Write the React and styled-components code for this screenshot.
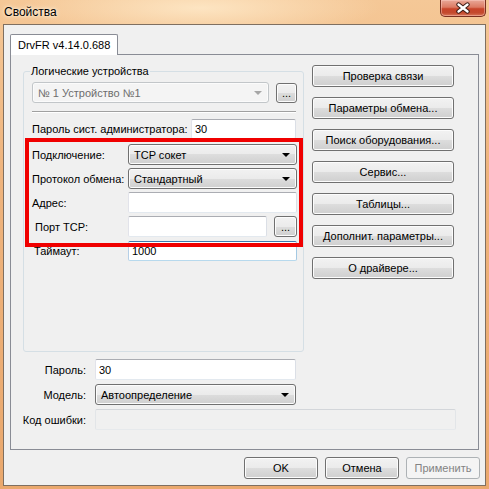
import React from 'react';
import styled, { createGlobalStyle, css } from 'styled-components';

const GlobalStyle = createGlobalStyle`
  html, body {
    margin: 0;
    padding: 0;
  }
  body {
    width: 489px;
    height: 489px;
    overflow: hidden;
    font-family: 'Liberation Sans', Arial, sans-serif;
    font-size: 11px;
    color: #000;
  }
  * {
    box-sizing: border-box;
  }
`;

const Window = styled.div`
  width: 489px;
  height: 489px;
  display: flex;
  flex-direction: column;
  padding: 0 3px 3px 3px;
  background: radial-gradient(ellipse 180px 30px at 200px 8px, rgba(255, 236, 205, 0.8), rgba(255, 236, 205, 0) 100%),
    linear-gradient(180deg, #f5c897 0%, #efb47d 35%, #eaa86d 100%);
`;

const TitleBar = styled.div`
  height: 24px;
  flex: none;
  display: flex;
  justify-content: space-between;
  align-items: flex-start;
`;

const Title = styled.span`
  margin: 5px 0 0 1px;
  font-size: 12px;
  line-height: 14px;
  text-shadow: 0 0 5px #fff5e6, 0 0 3px #fff5e6;
`;

const CloseButton = styled.div`
  width: 46px;
  height: 17px;
  display: flex;
  align-items: center;
  justify-content: center;
  border: 1px solid #7a3020;
  border-top: none;
  border-radius: 0 0 5px 5px;
  background: linear-gradient(180deg, #e9a898 0%, #dc7a63 45%, #c8442a 55%, #c34a2e 80%, #d8775a 100%);
  box-shadow: inset 0 0 0 1px rgba(255, 210, 200, 0.45);
`;

const Client = styled.div`
  flex: 1;
  display: flex;
  flex-direction: column;
  padding: 9px 5px 0 6px;
  background: #f0f0f0;
  border: 1px solid #7f6f60;
`;

const TabStrip = styled.div`
  display: flex;
  position: relative;
  z-index: 1;
  margin-bottom: -1px;
`;

const Tab = styled.div`
  height: 21px;
  padding: 0 7px;
  display: flex;
  align-items: center;
  background: #fff;
  border: 1px solid #898c95;
  border-bottom: none;
  border-radius: 2px 2px 0 0;
  font-size: 11px;
`;

const Panel = styled.div`
  height: 396px;
  margin-right: 1px;
  display: flex;
  flex-direction: column;
  background: #f0f0f0;
  border: 1px solid #898c95;
  padding-top: 10px;
`;

const TopSection = styled.div`
  display: flex;
  align-items: flex-start;
  padding-left: 12px;
`;

const GroupBox = styled.fieldset`
  width: 281px;
  height: 287px;
  margin: 0;
  padding: 4px 7px 0 8px;
  min-width: 0;
  border: 1px solid #d5dfe5;
  border-radius: 3px;
`;

const Legend = styled.legend`
  margin-left: -2px;
  padding: 0 1px;
  line-height: 13px;
`;

const Row = styled.div`
  display: flex;
  align-items: center;
  height: ${(p) => p.h || 21}px;
  margin-top: ${(p) => p.mt || 0}px;
  gap: ${(p) => p.gap || 0}px;
`;

const Separator = styled.div`
  height: 2px;
  margin-top: 8px;
  border-top: 1px solid #a0a0a0;
  border-bottom: 1px solid #fff;
`;

const Label = styled.span`
  flex: ${(p) => (p.w ? 'none' : 1)};
  width: ${(p) => (p.w ? `${p.w}px` : 'auto')};
  padding-left: ${(p) => p.indent || 0}px;
  white-space: nowrap;
`;

const Marked = styled.div`
  position: relative;
  margin-top: 5px;
  display: flex;
  flex-direction: column;
  gap: 3px;

  &::after {
    content: '';
    position: absolute;
    top: -6px;
    left: -7px;
    right: -7px;
    bottom: -10px;
    border: 4px solid #f00000;
    pointer-events: none;
    z-index: 2;
  }
`;

const controlBox = css`
  height: ${(p) => p.h || 21}px;
  width: ${(p) => p.w}px;
  flex: none;
`;

const TextBox = styled.div`
  ${controlBox};
  display: flex;
  align-items: center;
  padding: 0 3px;
  border: 1px solid;
  border-radius: 2px;
  border-color: ${(p) =>
    p.focused
      ? '#3d7bad #a4c9e3 #b7d9ed #b5cfe7'
      : p.disabled
      ? '#d3d6da #e2e5e8 #e6e9ec #e2e5e8'
      : '#abadb3 #dbdfe6 #e3e9ef #e2e3ea'};
  background: ${(p) => (p.disabled ? '#f0f0f0' : '#fff')};
`;

const Combo = styled.div`
  ${controlBox};
  display: flex;
  align-items: center;
  padding: 0 6px 0 5px;
  border: 1px solid ${(p) => (p.disabled ? '#c2c6c9' : '#707070')};
  border-radius: 3px;
  color: ${(p) => (p.disabled ? '#6d6d6d' : '#000')};
  background: ${(p) =>
    p.disabled
      ? '#f4f4f4'
      : 'linear-gradient(180deg, #f2f2f2 0%, #ebebeb 50%, #dddddd 50%, #cfcfcf 100%)'};
  box-shadow: ${(p) => (p.disabled ? 'inset 0 0 0 1px #fbfbfb' : 'inset 0 0 0 1px #fcfcfc')};
`;

const ComboText = styled.span`
  flex: 1;
  white-space: nowrap;
`;

const Arrow = styled.span`
  width: 0;
  height: 0;
  border-left: 4px solid transparent;
  border-right: 4px solid transparent;
  border-top: 4px solid ${(p) => (p.disabled ? '#a6a6a6' : '#000')};
`;

const Button = styled.button`
  height: ${(p) => p.h || 22}px;
  width: ${(p) => p.w}px;
  flex: none;
  padding: 0;
  margin-top: ${(p) => p.mt || 0}px;
  font-family: 'Liberation Sans', Arial, sans-serif;
  font-size: 11px;
  font-weight: 400;
  color: #000;
  border: 1px solid #707070;
  border-radius: 3px;
  background: linear-gradient(180deg, #f2f2f2 0%, #ebebeb 50%, #dddddd 50%, #cfcfcf 100%);
  box-shadow: inset 0 0 0 1px #fcfcfc;

  &:disabled {
    color: #838383;
    border-color: #adb2b5;
    background: #f4f4f4;
    box-shadow: none;
  }
`;

const ButtonStack = styled.div`
  margin-left: 8px;
  display: flex;
  flex-direction: column;
  gap: 10px;
`;

const FormGrid = styled.div`
  margin-top: 7px;
  display: grid;
  grid-template-columns: 75px auto;
  column-gap: 9px;
  row-gap: 4px;
  align-items: center;
  justify-items: start;
`;

const GridLabel = styled.span`
  justify-self: end;
  white-space: nowrap;
`;

const Footer = styled.div`
  margin-top: 7px;
  display: flex;
  justify-content: flex-end;
  gap: 7px;
`;

function CloseGlyph() {
  return (
    <svg width="16" height="12" viewBox="0 0 16 12">
      <path d="M3.5 2.5 L12.5 9.5 M12.5 2.5 L3.5 9.5" stroke="#3a1a14" strokeWidth="4.4" strokeLinecap="round" />
      <path d="M3.5 2.5 L12.5 9.5 M12.5 2.5 L3.5 9.5" stroke="#ffffff" strokeWidth="2.4" strokeLinecap="round" />
    </svg>
  );
}

const sideButtons = [
  'Проверка связи',
  'Параметры обмена...',
  'Поиск оборудования...',
  'Сервис...',
  'Таблицы...',
  'Дополнит. параметры...',
  'О драйвере...',
];

export default function App() {
  return (
    <>
      <GlobalStyle />
      <Window>
        <TitleBar>
          <Title>Свойства</Title>
          <CloseButton>
            <CloseGlyph />
          </CloseButton>
        </TitleBar>
        <Client>
          <TabStrip>
            <Tab>DrvFR v4.14.0.688</Tab>
          </TabStrip>
          <Panel>
            <TopSection>
              <GroupBox>
                <Legend>Логические устройства</Legend>
                <Row gap={7}>
                  <Combo w={237} disabled>
                    <ComboText>№ 1 Устройство №1</ComboText>
                    <Arrow disabled />
                  </Combo>
                  <Button w={21} h={20} mt={1}>...</Button>
                </Row>
                <Separator />
                <Row h={20} mt={6}>
                  <Label>Пароль сист. администратора:</Label>
                  <TextBox w={105} h={20}>30</TextBox>
                </Row>
                <Marked>
                  <Row>
                    <Label w={96}>Подключение:</Label>
                    <Combo w={169}>
                      <ComboText>TCP сокет</ComboText>
                      <Arrow />
                    </Combo>
                  </Row>
                  <Row>
                    <Label w={96}>Протокол обмена:</Label>
                    <Combo w={169}>
                      <ComboText>Стандартный</ComboText>
                      <Arrow />
                    </Combo>
                  </Row>
                  <Row>
                    <Label w={96}>Адрес:</Label>
                    <TextBox w={169} />
                  </Row>
                  <Row gap={7}>
                    <Label w={96} indent={3} style={{ marginRight: -7 }}>Порт TCP:</Label>
                    <TextBox w={139} />
                    <Button w={23} h={21}>...</Button>
                  </Row>
                </Marked>
                <Row mt={3}>
                  <Label w={96} indent={2}>Таймаут:</Label>
                  <TextBox w={169} h={20} focused>1000</TextBox>
                </Row>
              </GroupBox>
              <ButtonStack>
                {sideButtons.map((b) => (
                  <Button key={b} w={142}>
                    {b}
                  </Button>
                ))}
              </ButtonStack>
            </TopSection>
            <FormGrid>
              <GridLabel>Пароль:</GridLabel>
              <TextBox w={201}>30</TextBox>
              <GridLabel>Модель:</GridLabel>
              <Combo w={201}>
                <ComboText>Автоопределение</ComboText>
                <Arrow />
              </Combo>
              <GridLabel>Код ошибки:</GridLabel>
              <TextBox w={361} disabled />
            </FormGrid>
          </Panel>
          <Footer>
            <Button w={74}>OK</Button>
            <Button w={74}>Отмена</Button>
            <Button w={74} disabled>
              Применить
            </Button>
          </Footer>
        </Client>
      </Window>
    </>
  );
}
